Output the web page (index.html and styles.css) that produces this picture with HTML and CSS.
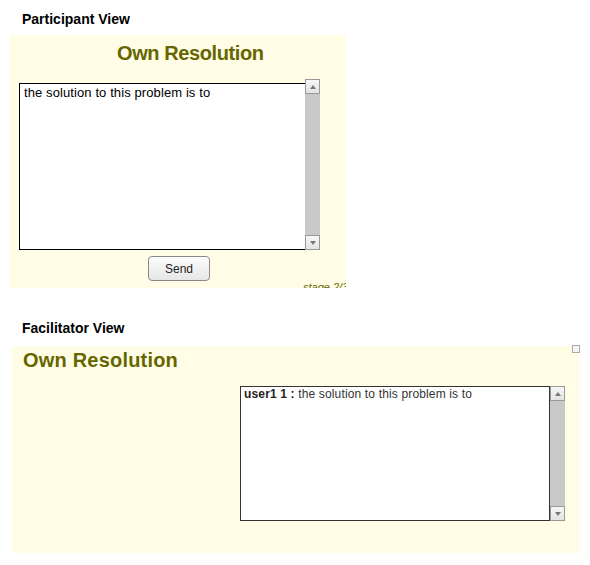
FILE: index.html
```html
<!DOCTYPE html>
<html>
<head>
<meta charset="utf-8">
<link rel="stylesheet" href="styles.css">
</head>
<body>
<div class="view-label first">Participant View</div>
<div class="panel participant">
  <div class="title centered">Own Resolution</div>
  <div class="box-row p-row">
    <div class="textbox p-box">the solution to this problem is to</div>
    <div class="scrollbar p-scroll">
      <div class="sb-btn"><span class="tri up"></span></div>
      <div class="sb-track"></div>
      <div class="sb-btn"><span class="tri down"></span></div>
    </div>
  </div>
  <div class="btn-row"><button class="send">Send</button></div>
  <div class="stage">stage 2/3</div>
</div>

<div class="view-label second">Facilitator View</div>
<div class="panel facilitator">
  <span class="corner"></span>
  <div class="title left">Own Resolution</div>
  <div class="box-row f-row">
    <div class="textbox f-box"><b>user1 1 :</b> the solution to this problem is to</div>
    <div class="scrollbar f-scroll">
      <div class="sb-btn"><span class="tri up"></span></div>
      <div class="sb-track"></div>
      <div class="sb-btn"><span class="tri down"></span></div>
    </div>
  </div>
</div>
</body>
</html>
```

FILE: styles.css
```css
body {
  margin: 0;
  font-family: "Liberation Sans", Arial, sans-serif;
  background: #fff;
}

.view-label {
  font-size: 14px;
  font-weight: bold;
  line-height: 16px;
  padding-left: 22px;
  color: #000;
}
.view-label.first { margin-top: 11px; }
.view-label.second { margin-top: 32px; }

.panel {
  background: #fffde6;
  position: relative;
  overflow: hidden;
}

.participant {
  margin: 8px 0 0 10px;
  width: 336px;
  height: 253px;
  padding-top: 6px;
  box-sizing: border-box;
}

.facilitator {
  margin: 10px 0 0 12px;
  width: 567px;
  height: 207px;
  padding-top: 2px;
  box-sizing: border-box;
  overflow: visible;
}

.title {
  font-size: 20px;
  font-weight: bold;
  line-height: 24px;
  color: #666600;
}
.title.centered {
  padding-left: 107px;
  letter-spacing: -0.4px;
}
.title.left {
  padding-left: 11px;
  letter-spacing: 0.2px;
}

.box-row {
  display: flex;
  align-items: flex-start;
}
.p-row {
  margin-top: 14px;
  padding-left: 9px;
}
.f-row {
  margin-top: 14px;
  padding-left: 228px;
}

.textbox {
  background: #fff;
  border: 1px solid #000;
  box-sizing: border-box;
}
.p-box {
  width: 287px;
  height: 167px;
  margin-top: 4px;
  margin-right: -1px;
  font-size: 13px;
  line-height: 15px;
  padding: 1px 4px;
  color: #000;
  letter-spacing: 0.1px;
}
.f-box {
  width: 310px;
  height: 135px;
  border-color: #333;
  font-size: 12px;
  line-height: 14px;
  padding: 0 3px;
  color: #333;
  letter-spacing: 0.15px;
}
.f-box b { color: #222; }

.scrollbar {
  width: 15px;
  display: flex;
  flex-direction: column;
  background: #c9c9c9;
  position: relative;
}
.p-scroll { height: 171px; }
.f-scroll { height: 135px; }

.sb-btn {
  height: 15px;
  box-sizing: border-box;
  border: 1px solid #999;
  background: linear-gradient(#f7f7f7, #e3e3e3);
  display: flex;
  align-items: center;
  justify-content: center;
}
.sb-track { flex: 1; }

.tri {
  width: 0;
  height: 0;
  border-left: 3px solid transparent;
  border-right: 3px solid transparent;
}
.tri.up { border-bottom: 4px solid #777; }
.tri.down { border-top: 4px solid #777; }

.btn-row {
  margin-top: 6px;
  padding-left: 138px;
}
.send {
  width: 62px;
  height: 25px;
  border: 1px solid #888;
  border-radius: 4px;
  background: linear-gradient(#fdfdfd, #e6e6e6);
  font-family: "Liberation Sans", Arial, sans-serif;
  font-size: 12px;
  color: #222;
  padding: 0;
  display: block;
}

.stage {
  margin-top: 0;
  padding-left: 293px;
  font-size: 11px;
  line-height: 13px;
  font-style: italic;
  color: #666600;
  white-space: nowrap;
}

.corner {
  position: absolute;
  top: -1px;
  right: -1px;
  width: 6px;
  height: 6px;
  border: 1px solid #aaa;
  background: #f4f4f4;
}
```
